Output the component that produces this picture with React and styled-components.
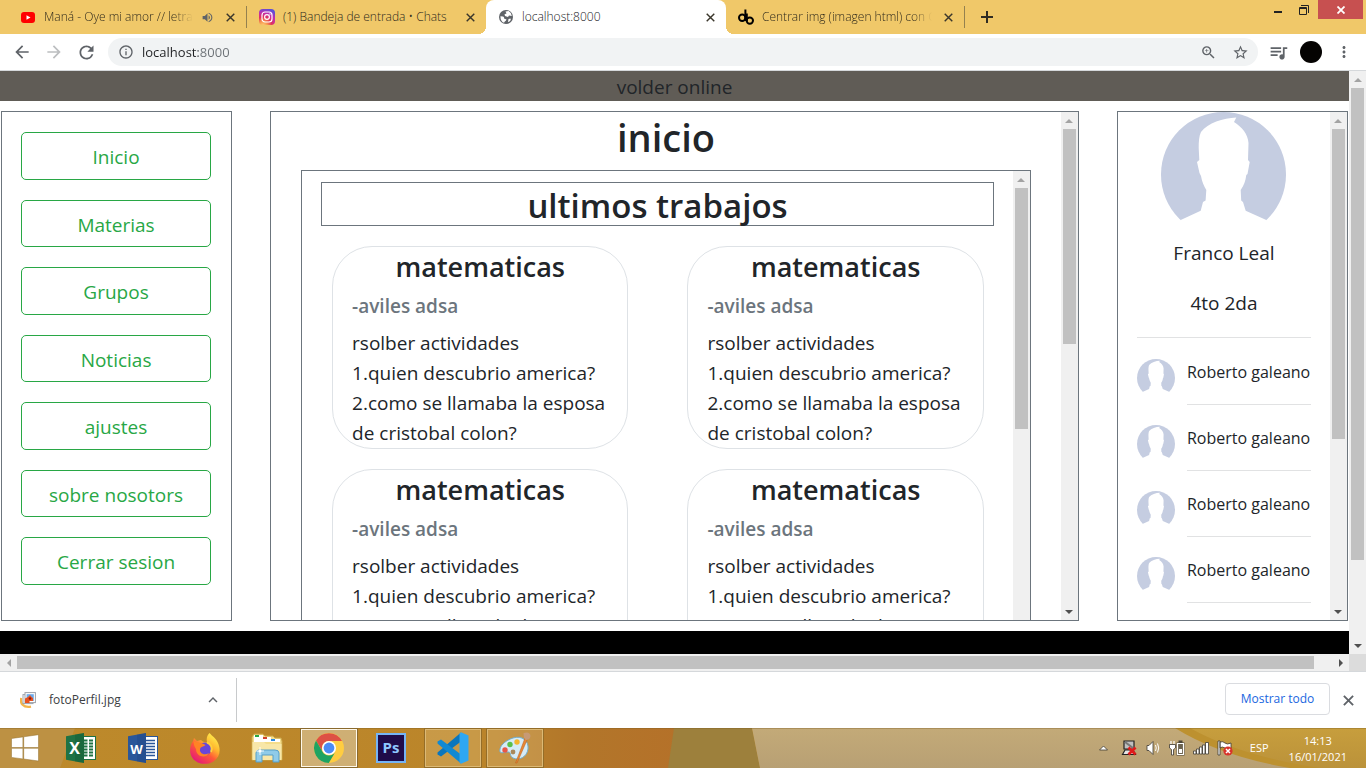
import React from 'react';
import styled, { createGlobalStyle, css } from 'styled-components';
import {
  MdArrowBack, MdArrowForward, MdRefresh, MdInfoOutline, MdZoomIn, MdStarBorder,
  MdQueueMusic, MdMoreVert, MdVolumeUp, MdKeyboardArrowUp,
} from 'react-icons/md';

const GlobalStyle = createGlobalStyle`
  *, *::before, *::after { box-sizing: border-box; }
  body {
    margin: 0;
    overflow: hidden;
    background: #fff;
    color: #212529;
    font-family: "Open Sans", "Noto Sans", sans-serif;
    font-size: 19px;
    line-height: 30px;
  }
  h1, h2, h3, h4, p, ul { margin: 0; padding: 0; }
  ul { list-style: none; }
  button, input { font: inherit; color: inherit; margin: 0; padding: 0; border: 0; background: none; }
  svg { display: block; flex: none; }
`;

const Window = styled.div`
  display: flex;
  flex-direction: column;
  height: 100vh;
`;

/* ---------- tab strip ---------- */

const TabStrip = styled.div`
  display: flex;
  flex: none;
  height: 34px;
  padding-left: 8px;
  background: #f0c869;
  font-size: 12px;
  font-weight: 300;
  line-height: 34px;
`;

const Tab = styled.div`
  position: relative;
  display: flex;
  align-items: center;
  flex: 0 1 ${(p) => (p.$active ? 240 : 239)}px;
  min-width: 0;
  gap: 8px;
  padding: 0 8px 0 12px;
  color: #2f2a1c;
  ${(p) => p.$active && css`
    background: #fff;
    border-radius: 8px 8px 0 0;
    color: #202124;
    &::before, &::after {
      content: "";
      position: absolute;
      bottom: 0;
      width: 8px;
      height: 8px;
    }
    &::before { right: 100%; background: radial-gradient(circle at 0 0, transparent 8px, #fff 8px); }
    &::after { left: 100%; background: radial-gradient(circle at 100% 0, transparent 8px, #fff 8px); }
  `}
  ${(p) => p.$divider && css`
    border-right: 1px solid #a08a55;
    border-image: linear-gradient(transparent 7px, #94814f 7px, #94814f 27px, transparent 27px) 1;
  `}
`;

const TabTitle = styled.span`
  flex: 1;
  min-width: 0;
  overflow: hidden;
  white-space: nowrap;
  ${(p) => p.$fade && css`mask-image: linear-gradient(90deg, #000 calc(100% - 20px), transparent);`}
`;

const IconButton = styled.button`
  display: flex;
  align-items: center;
  justify-content: center;
  flex: none;
  width: ${(p) => p.$size || 16}px;
  height: ${(p) => p.$size || 16}px;
  color: ${(p) => p.$color || '#5f6368'};
`;

const NewTab = styled(IconButton)`
  align-self: center;
  margin-left: 14px;
`;

const WindowControls = styled.div`
  display: flex;
  margin-left: auto;
  padding-right: 3px;
`;

const WindowButton = styled.button`
  display: flex;
  align-items: center;
  justify-content: center;
  width: ${(p) => (p.$close ? 45 : 26)}px;
  height: 19px;
  background: ${(p) => (p.$close ? '#c75050' : 'transparent')};
  margin-left: ${(p) => (p.$close ? 1 : 0)}px;
`;

/* ---------- toolbar ---------- */

const Toolbar = styled.div`
  display: flex;
  align-items: center;
  flex: none;
  height: 37px;
  padding: 0 10px;
  gap: 8px;
  border-bottom: 1px solid #d5d8db;
`;

const Omnibox = styled.label`
  display: flex;
  align-items: center;
  flex: 1;
  height: 28px;
  margin-left: 2px;
  padding: 0 10px;
  gap: 8px;
  border-radius: 14px;
  background: #f1f3f4;
  color: #5f6368;
`;

const Address = styled.input`
  flex: 1;
  min-width: 0;
  height: 28px;
  font-size: 13px;
  background: linear-gradient(90deg, #202124 56px, #6b7075 56px);
  background-clip: text;
  color: transparent;
  outline: 0;
`;

const StarSlot = styled(IconButton)`
  margin-left: 8px;
`;

const ToolbarEnd = styled.div`
  display: flex;
  align-items: center;
  gap: 10px;
`;

const Profile = styled.button`
  width: 22px;
  height: 22px;
  border-radius: 50%;
  background: #050302;
`;

/* ---------- scroll bars ---------- */

const Bar = styled.div`
  display: flex;
  flex: none;
  flex-direction: ${(p) => (p.$horizontal ? 'row' : 'column')};
  ${(p) => (p.$horizontal ? 'height' : 'width')}: 17px;
  background: #f0f0f0;
`;

const BarArrow = styled.div`
  display: flex;
  align-items: center;
  justify-content: center;
  flex: none;
  width: 17px;
  height: 17px;
`;

const BarTrack = styled.div`
  flex: 1;
  min-width: 0;
  min-height: 0;
  padding: ${(p) => (p.$horizontal ? '2px 0' : '0 2px')};
`;

const BarThumb = styled.div`
  background: #c1c1c1;
  width: ${(p) => (p.$horizontal ? `${p.$length}%` : '100%')};
  height: ${(p) => (p.$horizontal ? '100%' : `${p.$length}%`)};
`;

const arrowShapes = {
  up: '0,6 4,2 8,6',
  down: '0,2 4,6 8,2',
  left: '6,0 2,4 6,8',
  right: '2,0 6,4 2,8',
};

function Arrow({ dir, color }) {
  return (
    <BarArrow>
      <svg width="8" height="8" viewBox="0 0 8 8"><polygon points={arrowShapes[dir]} fill={color} /></svg>
    </BarArrow>
  );
}

function ScrollBar({ horizontal, length }) {
  return (
    <Bar $horizontal={horizontal} aria-hidden="true">
      <Arrow dir={horizontal ? 'left' : 'up'} color="#a3a3a3" />
      <BarTrack $horizontal={horizontal}><BarThumb $horizontal={horizontal} $length={length} /></BarTrack>
      <Arrow dir={horizontal ? 'right' : 'down'} color="#505050" />
    </Bar>
  );
}

/* ---------- web page ---------- */

const Viewport = styled.div`
  display: flex;
  flex: 1;
  min-height: 0;
`;

const Page = styled.div`
  display: flex;
  flex-direction: column;
  flex: 1;
  min-width: 0;
`;

const Banner = styled.header`
  flex: none;
  height: 30px;
  background: #605c56;
  line-height: 32px;
  text-align: center;
`;

const Columns = styled.div`
  display: grid;
  grid-template-columns: 2fr 7fr 2fr;
  gap: 38px;
  flex: 1;
  min-height: 0;
  padding: 10px 1px;
`;

const Footer = styled.footer`
  flex: none;
  height: 23px;
  background: #000;
`;

const Panel = styled.section`
  display: flex;
  min-width: 0;
  min-height: 0;
  border: 1px solid #6c757d;
`;

const PanelBody = styled.div`
  flex: 1;
  min-width: 0;
  overflow: hidden;
`;

const Menu = styled.nav`
  display: flex;
  flex-direction: column;
  gap: 20px;
  padding: 20px 20px 20px 19px;
`;

const MenuButton = styled.button`
  padding: 10px 12px 7px;
  border: 1px solid #28a745;
  border-radius: 5px;
  color: #28a745;
  line-height: 1.5;
  text-align: center;
`;

const PageTitle = styled.h1`
  margin-bottom: 8px;
  font-size: 38px;
  line-height: 50px;
  font-weight: 600;
  text-align: center;
`;

const Board = styled(Panel)`
  height: 560px;
  margin: 0 30px;
`;

const BoardTitle = styled.h2`
  margin: 11px 19px 20px;
  border: 1px solid #6c757d;
  font-size: 33px;
  line-height: 45px;
  height: 44px;
  font-weight: 600;
  text-align: center;
`;

const CardGrid = styled.div`
  display: grid;
  grid-template-columns: 1fr 1fr;
  row-gap: 20px;
`;

const Card = styled.article`
  margin: 0 29px 0 30px;
  padding: 0 19px;
  border: 1px solid #dee2e6;
  border-radius: 40px;
`;

const CardTitle = styled.h3`
  font-size: 27px;
  line-height: 40px;
  font-weight: 600;
  text-align: center;
`;

const CardAuthor = styled.h4`
  padding: 4px 0 7px;
  color: #6c757d;
  font-size: 19px;
  font-weight: 600;
`;

const Profiled = styled.div`
  display: flex;
  flex-direction: column;
  align-items: center;
  padding: 0 19px;
`;

const ProfileLine = styled.p`
  padding-top: 1px;
  margin-bottom: 19px;
`;

const Contacts = styled.ul`
  align-self: stretch;
  border-top: 1px solid #e1e2e3;
  padding-top: 21px;
`;

const Contact = styled.li`
  display: flex;
  justify-content: space-between;
  height: 46px;
  margin-bottom: 20px;
  font-size: 16px;
  line-height: 26px;
`;

const ContactName = styled.span`
  width: 124px;
  white-space: nowrap;
  border-bottom: 1px solid #e1e2e3;
`;

/* ---------- bars below the page ---------- */

const HorizontalRow = styled.div`
  display: grid;
  grid-template-columns: 1fr 17px;
  flex: none;
  background: #dcdcdc;
`;

const Downloads = styled.div`
  display: flex;
  align-items: center;
  flex: none;
  height: 57px;
  padding: 0 10px 0 20px;
  border-top: 1px solid #d5d8db;
  font-size: 12px;
`;

const DownloadItem = styled.div`
  display: flex;
  align-items: center;
  width: 217px;
  height: 44px;
  gap: 13px;
  padding-right: 15px;
  border-right: 1px solid #c8cacc;
  color: #3c4043;
`;

const FileName = styled.span`
  flex: 1;
  line-height: 32px;
`;

const ShowAll = styled.button`
  height: 32px;
  width: 105px;
  margin: 0 10px 2px auto;
  border: 1px solid #dadce0;
  border-radius: 4px;
  color: #1a66e0;
  font-weight: 500;
  font-size: 12px;
`;

const Taskbar = styled.div`
  position: relative;
  display: flex;
  flex: none;
  height: 40px;
  background: #bd8a2c;
  color: #fff;
`;

const Wallpaper = styled.svg`
  position: absolute;
  inset: 0;
  width: 100%;
  height: 100%;
`;

const Apps = styled.div`
  position: relative;
  display: flex;
  gap: 4px;
`;

const AppButton = styled.button`
  display: flex;
  align-items: center;
  justify-content: center;
  width: ${(p) => (p.$start ? 48 : 58)}px;
  height: 40px;
  padding-left: ${(p) => (p.$start ? 2 : 0)}px;
  ${(p) => p.$state === 'open' && css`
    border: 1px solid #946d28;
    background: rgba(255, 235, 190, 0.2);
    box-shadow: inset 0 0 0 1px #dcb975;
  `}
  ${(p) => p.$state === 'active' && css`
    border: 1px solid #8a6a2e;
    background: rgba(225, 215, 190, 0.5);
    box-shadow: inset 0 0 0 1px #fff8ea;
  `}
`;

const Tray = styled.div`
  position: relative;
  display: flex;
  align-items: center;
  gap: 8px;
  margin-left: auto;
  padding-right: 19px;
  font-size: 11px;
  line-height: 16px;
`;

const HiddenIcons = styled(IconButton)`
  margin-right: 1px;
`;

const Language = styled.span`
  margin-left: 9px;
`;

const Clock = styled.div`
  margin-left: 12px;
  padding-top: 2px;
  text-align: center;
`;

/* ---------- drawings ---------- */

function Avatar({ size }) {
  return (
    <svg width={size} height={size} viewBox="0 0 125 125" role="img" aria-label="Foto de perfil">
      <circle cx="62.5" cy="62.5" r="62.5" fill="#c5cde1" />
      <path
        fill="#fff"
        d="M75.3 5.5C62 6 47 11 40 20C38 24 37.7 30 37.7 36L38.3 48L36 50L38.5 61L40 64C41 70 43 74 45.3 78L44.6 88.5L42 90L39.7 98.7L19.7 108V125H105.3V108L84.7 98.7L82 90L80.2 88.5L79.7 78C83 73 84.5 69 85.3 63L86.5 62L88.7 50L87 48L87.5 31C87 22 81 15 73 10Z"
      />
    </svg>
  );
}

function Cross({ size = 9, width = 1.6 }) {
  return (
    <svg width={size} height={size} viewBox="0 0 10 10" stroke="currentColor" strokeWidth={width}>
      <path d="M0.8 0.8L9.2 9.2M9.2 0.8L0.8 9.2" />
    </svg>
  );
}

function Plus() {
  return (
    <svg width="12" height="12" viewBox="0 0 12 12" stroke="currentColor" strokeWidth="2"><path d="M0 6H12M6 0V12" /></svg>
  );
}

function Globe() {
  return (
    <svg width="16" height="16" viewBox="0 0 16 16">
      <circle cx="8" cy="8" r="7" fill="#5f6368" />
      <path d="M2.4 7.2L5 7.6Q6.5 8.2 6 9.5L8.5 10.5Q8 12 6.8 12.5L6 13.8Q2.5 12.5 2.4 7.2ZM7.5 2.5L10.5 2Q13.5 3.5 13.8 7L11 6.5L10 8L7 7L6.5 5.2L8.5 4.5ZM10.5 10L12.5 9.5L12.8 11Q11.5 12.8 10 13Z" fill="#fff" />
    </svg>
  );
}

function YouTube() {
  return (
    <svg width="16" height="16" viewBox="0 0 16 16">
      <rect x="1" y="3" width="14" height="11" rx="3" fill="#f00" />
      <path d="M6.5 6.2v4.6l4-2.3z" fill="#fff" />
    </svg>
  );
}

function Instagram() {
  return (
    <svg width="16" height="16" viewBox="0 0 16 16">
      <defs>
        <radialGradient id="ig" cx="0.25" cy="1.05" r="1.1">
          <stop offset="0" stopColor="#fed373" />
          <stop offset="0.28" stopColor="#f58d4d" />
          <stop offset="0.5" stopColor="#e1305c" />
          <stop offset="0.75" stopColor="#c02db0" />
          <stop offset="1" stopColor="#5b4fd6" />
        </radialGradient>
      </defs>
      <rect width="16" height="16" rx="4" fill="url(#ig)" />
      <rect x="3" y="3" width="10" height="10" rx="3" fill="none" stroke="#fff" strokeWidth="1.2" />
      <circle cx="8" cy="8" r="2.4" fill="none" stroke="#fff" strokeWidth="1.2" />
      <circle cx="11" cy="5" r="0.7" fill="#fff" />
    </svg>
  );
}

function DbLogo() {
  return (
    <svg width="16" height="16" viewBox="0 0 16 16" fill="none" stroke="#000" strokeWidth="2">
      <circle cx="4.2" cy="8.8" r="3.2" />
      <path d="M7.4 0.5V12" />
      <circle cx="11.8" cy="11.6" r="3.2" />
      <path d="M8.8 4.5V12" />
    </svg>
  );
}

function PhotoFile() {
  return (
    <svg width="16" height="17" viewBox="0 0 16 17">
      <path d="M1.2 6C0 11 3 16 11 14.6" fill="none" stroke="#f3b54a" strokeWidth="2.4" />
      <rect x="3" y="2.6" width="10" height="9" fill="#fff" stroke="#9da1a8" />
      <rect x="5" y="0.6" width="10.4" height="10" fill="#fff" stroke="#9da1a8" />
      <rect x="6.6" y="2.2" width="7.2" height="6.8" fill="#6aa9e9" />
      <path d="M5 11V6.5L8 5L10 3L11.5 5L13 6V9H9.5V11Z" fill="#e8501f" />
      <circle cx="10" cy="6.5" r="1.3" fill="#8b1a0c" />
    </svg>
  );
}

function WindowsLogo() {
  return (
    <svg width="28" height="28" viewBox="0 0 28 28" fill="#fff" stroke="#93702f" strokeWidth="0.5">
      <path d="M0.5 4.5L11.9 2.9V13.5H0.5ZM12.7 2.8L27.5 0.7V13.5H12.7ZM0.5 14.3H11.9V24.9L0.5 23.4ZM12.7 14.3H27.5V27L12.7 25Z" />
    </svg>
  );
}

function OfficeIcon({ color, dark, word }) {
  return (
    <svg width="30" height="30" viewBox="0 0 30 30">
      <rect x="15" y="3.5" width="14.5" height="23" fill="#fff" stroke={color} />
      {word
        ? <path d="M18 7.5H27M18 10.5H27M18 13.5H27M18 16.5H27M18 19.5H27M18 22.5H27" stroke={color} strokeWidth="1.3" />
        : <path d="M18 7.5H21.5M23 7.5H27M18 10.5H21.5M23 10.5H27M18 13.5H21.5M23 13.5H27M18 16.5H21.5M23 16.5H27M18 19.5H21.5M23 19.5H27M18 22.5H21.5M23 22.5H27" stroke={color} strokeWidth="2" />}
      <path d="M0 3.2L18 0V30L0 26.8Z" fill={color} />
      <path d="M9 1.6L18 0V30L9 28.4Z" fill={dark} opacity="0.25" />
      <text x="8.5" y="20.5" textAnchor="middle" fontFamily="Open Sans, sans-serif" fontWeight="700" fontSize={word ? 13 : 16} fill="#fff">{word ? 'W' : 'X'}</text>
    </svg>
  );
}

function Firefox() {
  return (
    <svg width="30" height="31" viewBox="0 0 30 31">
      <defs>
        <linearGradient id="ffx" x1="0.85" y1="0.05" x2="0.2" y2="0.95">
          <stop offset="0" stopColor="#fff14f" />
          <stop offset="0.35" stopColor="#ffb52e" />
          <stop offset="0.6" stopColor="#ff5a36" />
          <stop offset="1" stopColor="#e5177a" />
        </linearGradient>
      </defs>
      <path d="M19.5 0C22 3 26 5 28 10C31 17 30 24 23.5 28.5C17 32.5 7 31.5 2.5 25C-1 20 -0.5 13 3 8L4 5L7 8L11 7C12 8.5 15 10 17 9C16 5 17.5 2 19.5 0Z" fill="url(#ffx)" />
      <circle cx="15" cy="16" r="6.5" fill="#6a46d8" />
      <path d="M3.5 8C7 10 12 9.5 15.5 12C13 14 10.5 13.5 10 16.5C9.5 20 14 23 19 20C16 26 6 24 6 16C4.5 14 3.5 11 3.5 8Z" fill="#ff8324" />
      <path d="M17 9.5C21 11 23 15 21 19" fill="none" stroke="#ffcf3d" strokeWidth="2" />
    </svg>
  );
}

function Explorer() {
  return (
    <svg width="32" height="30" viewBox="0 0 32 30">
      <path d="M1 4L3 1H12L14 3H22L24 5H30L31 8V27H1Z" fill="#f4dd8b" stroke="#c9a548" />
      <path d="M3 2H12V4H20V6H29V9H3Z" fill="#fff" />
      <rect x="4" y="2" width="4" height="2" fill="#28a745" />
      <rect x="12" y="4" width="4" height="2" fill="#d1432f" />
      <rect x="20" y="6" width="4" height="2" fill="#2c8be0" />
      <path d="M1.5 9H13L15 11H30.5V27H1.5Z" fill="#f8e7a8" />
      <path d="M5 29V20Q5 17 8 17H24Q28 17 28 20V29H22V22H11V29Z" fill="#8fcbe9" stroke="#579fc7" />
      <path d="M9 14V22M5 18H13" stroke="#fff" strokeWidth="0.9" />
      <circle cx="9" cy="18" r="1.5" fill="#fff" />
    </svg>
  );
}

function Chrome() {
  return (
    <svg width="30" height="30" viewBox="0 0 30 30">
      <circle cx="15" cy="15" r="15" fill="#ffcd41" />
      <path d="M2 7.5A15 15 0 0 1 28 8H15A7.5 7.5 0 0 0 8.5 18.7Z" fill="#dd5145" />
      <path d="M2 7.5L8.5 18.7A7.5 7.5 0 0 0 21.5 18.7L14.8 30A15 15 0 0 1 2 7.5Z" fill="#1ea362" />
      <circle cx="15" cy="15" r="7" fill="#fff" />
      <circle cx="15" cy="15" r="5.4" fill="#4c8bf5" />
    </svg>
  );
}

function Photoshop() {
  return (
    <svg width="30" height="30" viewBox="0 0 30 30">
      <rect x="1" y="1" width="28" height="28" fill="#1f0c4a" stroke="#75b4f5" strokeWidth="2" />
      <text x="15" y="20" textAnchor="middle" fontFamily="Open Sans, sans-serif" fontWeight="700" fontSize="15" fill="#8fc8ff">Ps</text>
    </svg>
  );
}

function Code() {
  return (
    <svg width="32" height="32" viewBox="0 0 32 32">
      <path d="M24 0.5V9.5L4 24.5L0.5 22.5V20.5Z" fill="#0a76bd" />
      <path d="M0.5 9.5L4 7.5L24 22.5V31.5L0.5 11.5Z" fill="#1089d3" />
      <path d="M24 0.3L31.5 3.5V28.5L24 31.8L22.5 30.5V1.5Z" fill="#2ea7f2" />
    </svg>
  );
}

function Paint() {
  return (
    <svg width="32" height="32" viewBox="0 0 32 32">
      <path d="M14 6C23 3 30 9 29 17C28 25 20 29 14 26C10 24 13 20 9 20C4 20 0 23 1 17C2 12 8 8 14 6Z" fill="#d6ebf6" stroke="#72aecd" />
      <circle cx="14" cy="20" r="2.4" fill="#a9885a" />
      <circle cx="6" cy="18" r="2.7" fill="#e75745" />
      <circle cx="11" cy="12.5" r="2.7" fill="#5abf4a" />
      <circle cx="18" cy="10" r="2.7" fill="#f4b52e" />
      <path d="M26 6L28.5 7L18 31L16.5 31Z" fill="#e88735" stroke="#b65e1c" strokeWidth="0.5" />
      <path d="M24.5 1Q31 -1 31.5 4Q31 8 27 8L25 6Z" fill="#c79a76" />
    </svg>
  );
}

const trayStroke = { stroke: '#3d3a33', strokeWidth: 0.8, fill: '#fff' };

function TrayIcons() {
  return (
    <>
      <HiddenIcons aria-label="Mostrar iconos ocultos">
        <svg width="9" height="6" viewBox="0 0 9 6"><path d="M0.5 5L4.5 1L8.5 5Z" {...trayStroke} /></svg>
      </HiddenIcons>
      <svg width="16" height="16" viewBox="0 0 16 16">
        <path d="M3 1H13V9H3Z" fill="#bfbfbf" stroke="#222" strokeWidth="1.2" />
        <path d="M1.5 14.5L4 10H12L14.5 14.5Z" fill="#e6e6e6" stroke="#222" strokeWidth="1.2" />
        <path d="M4 2L12 8" stroke="#777" strokeWidth="2" />
        <path d="M7.5 7.5L14.5 14.5M14.5 7.5L7.5 14.5" stroke="#e01b1b" strokeWidth="2.8" />
      </svg>
      <svg width="16" height="16" viewBox="0 0 16 16">
        <path d="M2 5.5H4L8 1.5V14.5L4 10.5H2Z" {...trayStroke} />
        <path d="M10.5 5Q12 8 10.5 11M12.5 3.5Q15 8 12.5 12.5" stroke="#fff" fill="none" />
      </svg>
      <svg width="16" height="16" viewBox="0 0 16 16">
        <path d="M7.5 2.5H9.5V0.5H13.5V2.5H15.5V15.5H7.5Z" fill="#4a4538" />
        <path d="M8.5 3.5H14.5V14.5H8.5Z" fill="#6b6350" stroke="#fff" strokeWidth="1.2" />
        <rect x="10" y="9" width="3" height="4" fill="#fff" />
        <path d="M2 1V4M5 1V4" stroke="#fff" strokeWidth="1.2" />
        <path d="M0.5 4.5H6.5V8L4.5 9.5V15H2.5V9.5L0.5 8Z" {...trayStroke} />
      </svg>
      <svg width="16" height="16" viewBox="0 0 16 16">
        <path d="M0.5 11H3V14H0.5ZM3.5 9H6V14H3.5ZM6.5 7H9V14H6.5ZM9.5 5H12V14H9.5ZM12.5 2.5H15.5V14H12.5Z" {...trayStroke} />
      </svg>
      <svg width="16" height="16" viewBox="0 0 16 16">
        <path d="M1 1H3V15H1ZM3 2Q6 1 8 3T14 3V9Q11 10 8 8T3 8Z" {...trayStroke} />
        <circle cx="11" cy="11" r="4.6" fill="#d8342c" />
        <path d="M9 9L13 13M13 9L9 13" stroke="#fff" strokeWidth="1.5" />
      </svg>
    </>
  );
}

function TaskbarWallpaper() {
  return (
    <Wallpaper viewBox="0 0 1366 40" preserveAspectRatio="none" aria-hidden="true">
      <defs>
        <linearGradient id="amber"><stop offset="0" stopColor="#bd8a2b" /><stop offset="0.7" stopColor="#bb852a" /><stop offset="0.85" stopColor="#b2762a" /><stop offset="1" stopColor="#b57129" /></linearGradient>
        <linearGradient id="sand" x2="0" y2="1"><stop offset="0" stopColor="#c3aa78" /><stop offset="1" stopColor="#b8a074" /></linearGradient>
        <linearGradient id="gold" x2="0" y2="1"><stop offset="0" stopColor="#c79e3d" /><stop offset="1" stopColor="#bb923a" /></linearGradient>
      </defs>
      <rect width="680" height="40" fill="url(#amber)" />
      <path d="M0 0H75L60 40H0Z" fill="#bd9143" />
      <path d="M674 0H752L760 40H668Z" fill="#9d803c" />
      <path d="M752 0H1366V40H760Z" fill="url(#sand)" />
      <path d="M1175 0H1366V40H1290Q1220 28 1175 0Z" fill="#bd912f" />
      <path d="M1190 0H1366V40H1320Q1240 28 1190 0Z" fill="url(#gold)" />
      <rect width="1366" height="1" fill="#7c5c20" opacity="0.35" />
    </Wallpaper>
  );
}

/* ---------- content ---------- */

const menu = ['Inicio', 'Materias', 'Grupos', 'Noticias', 'ajustes', 'sobre nosotors', 'Cerrar sesion'];
const works = [1, 2, 3, 4];
const contacts = [1, 2, 3, 4];

function CloseTab() {
  return <IconButton aria-label="Cerrar pestaña" $color="#3a362b"><Cross /></IconButton>;
}

function Work() {
  return (
    <Card>
      <CardTitle>matematicas</CardTitle>
      <CardAuthor>-aviles adsa</CardAuthor>
      <p>rsolber actividades<br />1.quien descubrio america?<br />2.como se llamaba la esposa de cristobal colon?</p>
    </Card>
  );
}

export default function App() {
  return (
    <Window>
      <GlobalStyle />
      <TabStrip>
        <Tab $divider>
          <YouTube />
          <TabTitle $fade>Maná - Oye mi amor // letra</TabTitle>
          <MdVolumeUp size={13} color="#5f6368" />
          <CloseTab />
        </Tab>
        <Tab>
          <Instagram />
          <TabTitle>(1) Bandeja de entrada • Chats</TabTitle>
          <CloseTab />
        </Tab>
        <Tab $active>
          <Globe />
          <TabTitle>localhost:8000</TabTitle>
          <CloseTab />
        </Tab>
        <Tab $divider>
          <DbLogo />
          <TabTitle $fade>Centrar img (imagen html) con CSS</TabTitle>
          <CloseTab />
        </Tab>
        <NewTab aria-label="Nueva pestaña" $color="#302c22"><Plus /></NewTab>
        <WindowControls>
          <WindowButton aria-label="Minimizar">
            <svg width="10" height="10" viewBox="0 0 10 10"><rect x="1" y="6" width="8" height="2" fill="#222" /></svg>
          </WindowButton>
          <WindowButton aria-label="Restaurar">
            <svg width="10" height="10" viewBox="0 0 10 10" fill="none" stroke="#222"><path d="M2 0.5H9.5V8" /><path d="M0.5 2.5H7.5V9.5H0.5ZM0.5 3.5H7.5" /></svg>
          </WindowButton>
          <WindowButton $close aria-label="Cerrar">
            <svg width="8" height="8" viewBox="0 0 8 8" stroke="#fff" strokeWidth="1.8"><path d="M0.5 0.5L7.5 7.5M7.5 0.5L0.5 7.5" /></svg>
          </WindowButton>
        </WindowControls>
      </TabStrip>

      <Toolbar>
        <IconButton $size={24} aria-label="Atrás"><MdArrowBack size={20} /></IconButton>
        <IconButton $size={24} $color="#bcbec0" aria-label="Adelante"><MdArrowForward size={20} /></IconButton>
        <IconButton $size={24} aria-label="Recargar"><MdRefresh size={21} /></IconButton>
        <Omnibox>
          <MdInfoOutline size={16} />
          <Address aria-label="Dirección" defaultValue="localhost:8000" />
          <IconButton aria-label="Zoom"><MdZoomIn size={17} /></IconButton>
          <StarSlot aria-label="Favorito"><MdStarBorder size={17} /></StarSlot>
        </Omnibox>
        <ToolbarEnd>
          <IconButton $size={24} aria-label="Multimedia"><MdQueueMusic size={21} /></IconButton>
          <Profile aria-label="Perfil" />
          <IconButton $size={24} aria-label="Menú"><MdMoreVert size={18} /></IconButton>
        </ToolbarEnd>
      </Toolbar>

      <Viewport>
        <Page>
          <Banner>volder online</Banner>
          <Columns>
            <Panel>
              <PanelBody>
                <Menu>{menu.map((label) => <MenuButton key={label}>{label}</MenuButton>)}</Menu>
              </PanelBody>
            </Panel>
            <Panel>
              <PanelBody>
                <PageTitle>inicio</PageTitle>
                <Board>
                  <PanelBody>
                    <BoardTitle>ultimos trabajos</BoardTitle>
                    <CardGrid>{works.map((id) => <Work key={id} />)}</CardGrid>
                  </PanelBody>
                  <ScrollBar length={46} />
                </Board>
              </PanelBody>
              <ScrollBar length={45.4} />
            </Panel>
            <Panel>
              <PanelBody>
                <Profiled>
                  <Avatar size={125} />
                  <ProfileLine>Franco Leal</ProfileLine>
                  <ProfileLine>4to 2da</ProfileLine>
                  <Contacts>
                    {contacts.map((id) => (
                      <Contact key={id}>
                        <Avatar size={38} />
                        <ContactName>Roberto galeano</ContactName>
                      </Contact>
                    ))}
                  </Contacts>
                </Profiled>
              </PanelBody>
              <ScrollBar length={65.4} />
            </Panel>
          </Columns>
          <Footer />
        </Page>
        <ScrollBar length={86} />
      </Viewport>
      <HorizontalRow><ScrollBar horizontal length={98.6} /></HorizontalRow>

      <Downloads>
        <DownloadItem>
          <PhotoFile />
          <FileName>fotoPerfil.jpg</FileName>
          <IconButton aria-label="Opciones"><MdKeyboardArrowUp size={18} /></IconButton>
        </DownloadItem>
        <ShowAll>Mostrar todo</ShowAll>
        <IconButton aria-label="Cerrar descargas"><Cross size={11} width={1.7} /></IconButton>
      </Downloads>

      <Taskbar>
        <TaskbarWallpaper />
        <Apps>
          <AppButton $start aria-label="Inicio de Windows"><WindowsLogo /></AppButton>
          <AppButton aria-label="Excel"><OfficeIcon color="#1f7244" dark="#0b4a28" /></AppButton>
          <AppButton aria-label="Word"><OfficeIcon color="#2a5699" dark="#1b3d77" word /></AppButton>
          <AppButton aria-label="Firefox"><Firefox /></AppButton>
          <AppButton aria-label="Explorador"><Explorer /></AppButton>
          <AppButton $state="active" aria-label="Chrome"><Chrome /></AppButton>
          <AppButton aria-label="Photoshop"><Photoshop /></AppButton>
          <AppButton $state="open" aria-label="Code"><Code /></AppButton>
          <AppButton $state="open" aria-label="Paint"><Paint /></AppButton>
        </Apps>
        <Tray>
          <TrayIcons />
          <Language>ESP</Language>
          <Clock>14:13<br />16/01/2021</Clock>
        </Tray>
      </Taskbar>
    </Window>
  );
}
